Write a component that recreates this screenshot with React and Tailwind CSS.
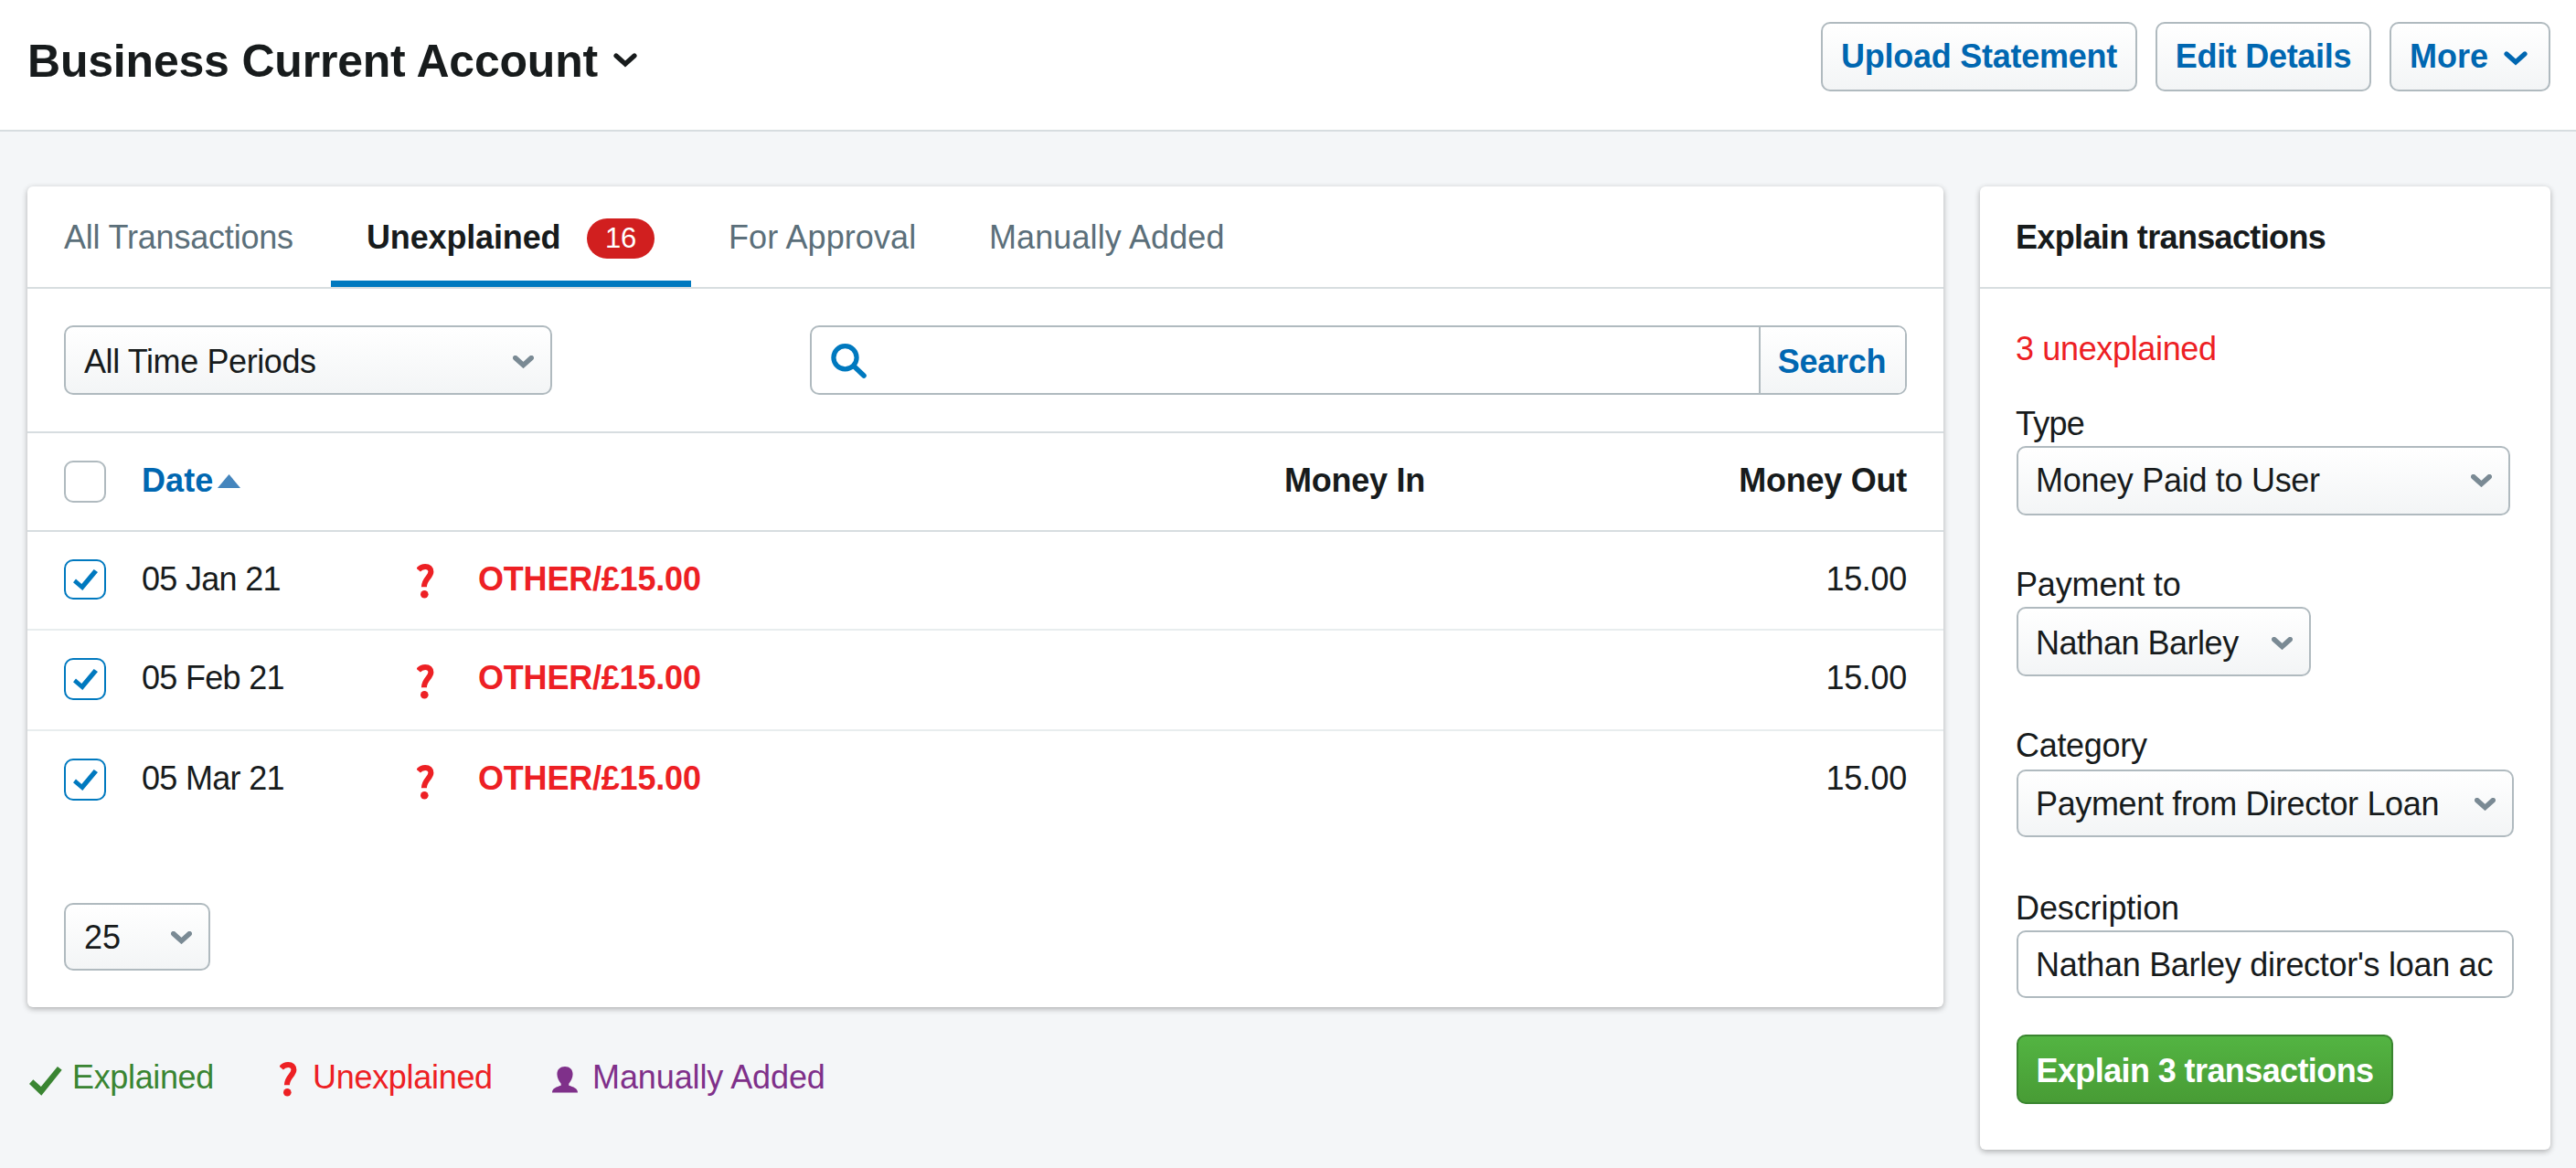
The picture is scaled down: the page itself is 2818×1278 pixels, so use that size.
import React, { useState } from 'react'

const transactions = [
    { id: 1, date: '05 Jan 21', description: 'OTHER/£15.00', moneyOut: '15.00', row: 'h-[108px] border-b-2', box: 'h-[44px]', icon: 'mt-[5px]' },
    { id: 2, date: '05 Feb 21', description: 'OTHER/£15.00', moneyOut: '15.00', row: 'h-[110px] border-b-2', box: 'h-[46px]', icon: 'mt-[7px]' },
    { id: 3, date: '05 Mar 21', description: 'OTHER/£15.00', moneyOut: '15.00', row: 'h-[106px]', box: 'h-[46px]', icon: 'mt-[7px]' },
]

function App() {

    const [checked, setChecked] = useState([1, 2, 3]);

    function toggle(id) {
        setChecked((list) => list.includes(id) ? list.filter((n) => n !== id) : [...list, id]);
    }

    return (
        <div className="min-h-[1278px] bg-[#f4f6f8] font-['Liberation_Sans',Arial,sans-serif] text-[36px] leading-10 text-[#171b1c]">

            <header className="flex justify-between h-[144px] pl-[30px] pr-7 pt-6 bg-white border-b-2 border-[#d7dde0]">
                <button type="button" className="flex items-center gap-[17px] h-[84px]">
                    <h1 className="pt-0.5 text-[50px] font-bold leading-[60px] tracking-[-0.2px]">Business Current Account</h1>
                    <Chevron className="w-[26px] h-4" />
                </button>
                <div className="flex gap-5">
                    <Button className="w-[346px] tracking-[-0.25px]">Upload Statement</Button>
                    <Button className="w-[236px] tracking-[-0.3px]">Edit Details</Button>
                    <Button className="w-[176px] pr-[3px]">
                        More
                        <Chevron className="w-[26px] h-4 ml-[17px] mt-1" />
                    </Button>
                </div>
            </header>

            <main className="flex items-start gap-10 pl-[30px] pr-7 pt-[60px]">
                <div className="w-[2096px]">
                    <section className="h-[898px] bg-white rounded-md shadow-[0_2px_6px_rgba(0,0,0,0.3)]">
                        <nav className="flex h-[112px] border-b-2 border-[#d7dde0]">
                            <Tab className="w-[332px] pl-10 tracking-[-0.2px]">All Transactions</Tab>
                            <Tab active className="w-[394px] pl-[39px] tracking-[-0.15px]">
                                Unexplained
                                <span className="flex items-center justify-center w-[74px] h-[44px] mt-0.5 ml-auto rounded-full bg-[#d11f1f] text-[31px] font-normal text-white">16</span>
                            </Tab>
                            <Tab className="w-[286px] pl-[41px] tracking-[0.1px]">For Approval</Tab>
                            <Tab className="w-[340px] pl-10 tracking-[0.1px]">Manually Added</Tab>
                        </nav>

                        <div className="flex justify-between h-[158px] px-10 pt-10 border-b-2 border-[#d7dde0]">
                            <Select className="w-[534px] h-[76px] pt-1 pl-5 tracking-[-0.4px]">All Time Periods</Select>
                            <form className="flex w-[1200px] h-[76px] rounded-[10px] border-2 border-[#b0babf] overflow-hidden" onSubmit={(e) => e.preventDefault()}>
                                <div className="flex items-start flex-1 pl-[21px] pt-[18px]">
                                    <SearchIcon />
                                    <input type="text" className="flex-1 focus:outline-none" />
                                </div>
                                <button type="submit" className="w-[160px] pt-1 pr-0.5 border-l-2 border-[#b0babf] bg-linear-to-b from-white to-[#f3f5f6] font-bold tracking-[-0.3px] text-[#0067b1]">
                                    Search
                                </button>
                            </form>
                        </div>

                        <div className="grid grid-cols-[84px_369px_1036px_1fr] items-center h-[108px] px-10 border-b-2 border-[#d7dde0] font-bold">
                            <span className="w-[46px] h-[46px] rounded-[10px] border-2 border-[#b0babf]"></span>
                            <a href="#" className="flex items-center gap-[5px] pb-0.5 pl-px tracking-[0.1px] text-[#0067b1]">
                                Date
                                <svg viewBox="0 0 25 15" className="w-[25px] h-[15px]">
                                    <path d="M12.5 0L25 15H0Z" fill="#4485bd" />
                                </svg>
                            </a>
                            <span className="pb-0.5 text-right tracking-[-0.25px]">Money In</span>
                            <span className="pb-0.5 text-right tracking-[-0.25px]">Money Out</span>
                        </div>

                        {transactions.map((t) => (
                            <div key={t.id} className={`grid grid-cols-[84px_302px_67px_1fr_auto] items-start px-10 pt-[30px] border-[#e8edee] ${t.row}`}>
                                <button
                                    type="button"
                                    onClick={() => toggle(t.id)}
                                    className={`flex items-center justify-center w-[46px] rounded-[10px] border-2 border-[#0079bf] ${t.box}`}
                                >
                                    {checked.includes(t.id) && <BoxTick />}
                                </button>
                                <span className="mt-0.5 pl-px tracking-[-0.7px]">{t.date}</span>
                                <QuestionIcon className={t.icon} />
                                <span className="mt-0.5 font-bold tracking-[-0.2px] text-[#ed2024]">{t.description}</span>
                                <span className="mt-0.5 tracking-[-0.3px]">{t.moneyOut}</span>
                            </div>
                        ))}

                        <div className="px-10 pt-[82px]">
                            <Select className="w-[160px] h-[74px] pt-0.5 pl-5">25</Select>
                        </div>
                    </section>

                    <div className="flex items-center pt-14">
                        <span className="flex items-center w-[276px] tracking-[-0.35px] text-[#3a8532]">
                            <svg viewBox="0 0 36 32" className="w-9 h-8 ml-0.5 mt-2 mr-[11px]" fill="currentColor">
                                <path d="M0 19L4.3 14.3L12.9 22L30.9 0L35.7 3.7L13.3 31.8Z" />
                            </svg>
                            Explained
                        </span>
                        <span className="flex items-center w-[298px] tracking-[-0.3px] text-[#ed2024]">
                            <QuestionIcon className="mt-1" />
                            <span className="ml-[17px]">Unexplained</span>
                        </span>
                        <span className="flex items-center tracking-[-0.1px] text-[#7f308a]">
                            <svg viewBox="0 0 28 29" className="w-7 h-[29px] mr-4 mt-1" fill="currentColor">
                                <path d="M14 0C19 0 22.6 3 22.6 8.3C22.6 12.5 20.5 16 18.3 18.8V20.8C23 22.4 28 23.6 28 28.6H0C0 23.6 5 22.4 9.7 20.8V18.8C7.5 16 5.4 12.5 5.4 8.3C5.4 3 9 0 14 0Z" />
                            </svg>
                            Manually Added
                        </span>
                    </div>
                </div>

                <aside className="w-[624px] h-[1054px] bg-white rounded-md shadow-[0_2px_6px_rgba(0,0,0,0.3)]">
                    <h2 className="flex items-center h-[112px] pt-0.5 pl-[39px] border-b-2 border-[#d7dde0] font-bold tracking-[-0.65px]">Explain transactions</h2>
                    <div className="flex flex-col items-start pl-10 pt-[46px]">
                        <p className="-ml-px mb-[42px] tracking-[-0.35px] text-[#ed2024]">3 unexplained</p>
                        <Field label="Type" className="mb-14 gap-1" labelClass="tracking-[-0.8px]">
                            <Select className="w-[540px] h-[76px] pl-[19px] tracking-[-0.3px]">Money Paid to User</Select>
                        </Field>
                        <Field label="Payment to" className="mb-14 gap-1" labelClass="tracking-[-0.15px]">
                            <Select className="w-[322px] h-[76px] pt-1 pl-[19px] tracking-[-0.5px]">Nathan Barley</Select>
                        </Field>
                        <Field label="Category" className="mb-[58px] gap-1.5" labelClass="tracking-[-0.3px]">
                            <Select className="w-[544px] h-[74px] pt-0.5 pl-[19px] tracking-[-0.35px]">Payment from Director Loan</Select>
                        </Field>
                        <Field label="Description" className="mb-10 gap-1" labelClass="tracking-[-0.1px]">
                            <input
                                type="text"
                                defaultValue="Nathan Barley director's loan ac"
                                className="block w-[544px] h-[74px] pt-0.5 px-[19px] rounded-[10px] border-2 border-[#b0babf] tracking-[-0.28px] focus:outline-none"
                            />
                        </Field>
                        <button type="button" className="w-[412px] h-[76px] pt-1 rounded-[10px] border-2 border-[#3a8530] bg-linear-to-b from-[#53b442] to-[#489c35] font-bold tracking-[-0.6px] text-white whitespace-nowrap">
                            Explain 3 transactions
                        </button>
                    </div>
                </aside>
            </main>
        </div>
    )
}

function Button({ className, children }) {
    return (
        <button
            type="button"
            className={`flex items-center justify-center h-[76px] rounded-[10px] border-2 border-[#b0babf] bg-linear-to-b from-white to-[#f3f5f6] font-bold text-[#0067b1] whitespace-nowrap ${className}`}
        >
            {children}
        </button>
    )
}

function Tab({ active, className, children }) {
    return (
        <a
            href="#"
            className={`flex items-center h-[110px] pr-10 whitespace-nowrap ${
                active
                ? 'font-bold border-b-[7px] border-[#0079bf] pt-[9px]'
                : 'text-[#5b6f7a] pt-0.5'
            } ${className}`}
        >
            {children}
        </a>
    )
}

function Select({ className, children }) {
    return (
        <button
            type="button"
            className={`flex items-center justify-between pr-[18px] rounded-[10px] border-2 border-[#b0babf] bg-linear-to-b from-white to-[#f3f5f6] whitespace-nowrap ${className}`}
        >
            {children}
            <Chevron className="w-[23px] h-[14px] text-[#7a8a94]" bold />
        </button>
    )
}

function Field({ label, labelClass, className, children }) {
    return (
        <div className={`flex flex-col ${className}`}>
            <label className={`-ml-px ${labelClass}`}>{label}</label>
            {children}
        </div>
    )
}

function Chevron({ className, bold }) {
    return (
        <svg viewBox="0 0 26 16" className={className} fill="none" stroke="currentColor" strokeWidth={bold ? 6.2 : 5.2} strokeLinecap="round">
            <path d="M3 3L13 12L23 3" />
        </svg>
    )
}

function SearchIcon() {
    return (
        <svg viewBox="0 0 39 38" className="w-[39px] h-[38px]" fill="none" stroke="#0079bf" strokeLinecap="round">
            <circle cx="15.5" cy="15.2" r="12.6" strokeWidth="5.2" />
            <path d="M25.5 25L36 35" strokeWidth="5.6" />
        </svg>
    )
}

function BoxTick() {
    return (
        <svg viewBox="0 0 27 23" className="w-[27px] h-[23px]" fill="#0079bf">
            <path d="M0 14.3L3 10.6L9.3 15.9L22.7 0L27 3L10.3 23Z" />
        </svg>
    )
}

function QuestionIcon({ className }) {
    return (
        <svg viewBox="0 0 19 38" className={`w-[19px] h-[38px] ${className}`}>
            <path d="M1.6 6.6C3.6 4.2 6.4 3 9.2 3C13.2 3 15.4 5.2 15.4 8.6C15.4 14.5 7.9 16.5 7.9 25.3" fill="none" stroke="#ed2024" strokeWidth="6" />
            <circle cx="8.3" cy="33.2" r="4.3" fill="#ed2024" />
        </svg>
    )
}

export default App
